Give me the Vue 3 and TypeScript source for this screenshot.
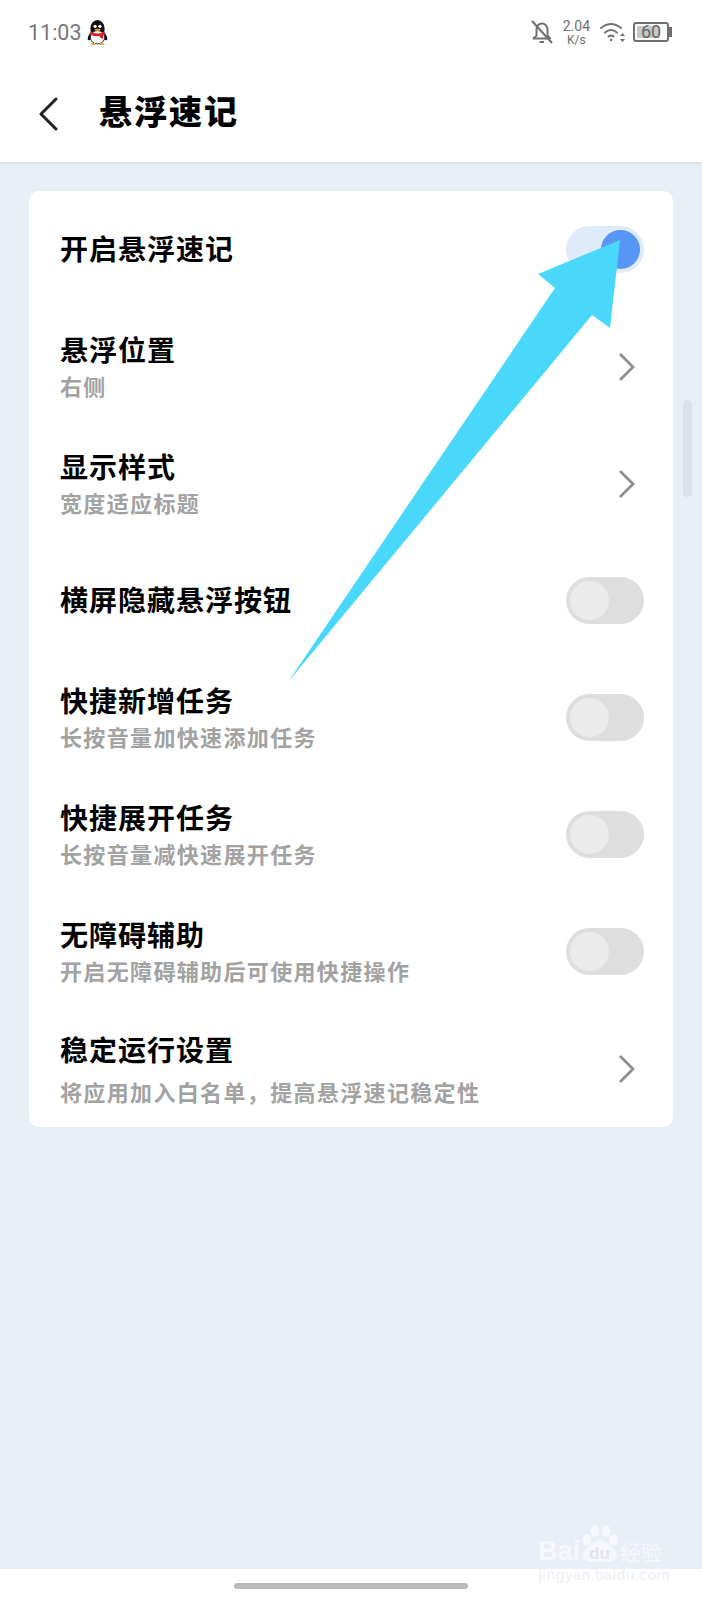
<template>
  <div class="page">
    <div class="topBar">
      <div class="statusBar">
        <div class="statusLeft">
          <span class="time">11:03</span>
          <svg class="penguin" width="21" height="25" viewBox="0 0 22 26">
            <ellipse cx="11" cy="9" rx="7.5" ry="9" fill="#111" />
            <ellipse cx="3.5" cy="17" rx="2" ry="4.5" fill="#111" transform="rotate(25 3.5 17)" />
            <ellipse cx="18.5" cy="17" rx="2" ry="4.5" fill="#111" transform="rotate(-25 18.5 17)" />
            <ellipse cx="11" cy="18" rx="7.5" ry="7" fill="#fff" stroke="#222" stroke-width="1" />
            <path d="M3.5 12 Q11 16 18.500 12 L18.800 15 Q11 19 3.200 15 Z" fill="#d8232a" />
            <path d="M13 15 L17 15 L16.500 20 L13.500 18 Z" fill="#d8232a" />
            <circle cx="8.500" cy="6.500" r="1.700" fill="#fff" />
            <circle cx="13.500" cy="6.500" r="1.700" fill="#fff" />
            <path d="M7.500 10 Q11 8 14.500 10 Q11 12.500 7.500 10 Z" fill="#f0a81e" />
            <ellipse cx="6.500" cy="25" rx="3" ry="1" fill="#e8a63a" />
            <ellipse cx="15.500" cy="25" rx="3" ry="1" fill="#e8a63a" />
          </svg>
        </div>
        <div class="statusRight">
          <svg width="22" height="24" viewBox="0 0 22 24" fill="none" stroke="#707070" stroke-width="2">
            <path d="M2.500 18.500 H19 L16.500 15.500 V9.500 A5.500 6 0 0 0 5.500 9.500 V15.500 Z" stroke-linejoin="round" />
            <path d="M8.500 22 H13" />
            <path d="M1 1 L21 23" />
          </svg>
          <div class="speed">
            <span>2.04</span>
            <span class="speedUnit">K/s</span>
          </div>
          <svg width="26" height="22" viewBox="0 0 26 22" fill="none" stroke="#707070" stroke-width="2" stroke-linecap="round">
            <path d="M1 7 Q11 -1 21 7" />
            <path d="M5 11.500 Q11 6.500 17 11.500" />
            <path d="M8.500 15.500 Q11 13.500 13.500 15.500" />
            <circle cx="11" cy="19" r="1.300" fill="#707070" stroke="none" />
            <path d="M22.500 12 L25 15 H20 Z M22.500 21 L25 18 H20 Z" fill="#707070" stroke="none" />
          </svg>
          <div class="battery">
            <div class="batteryBody">
              <div class="batteryFill"></div>
              <span class="batteryText">60</span>
            </div>
            <div class="batteryCap"></div>
          </div>
        </div>
      </div>
      <div class="header">
        <svg class="back" width="22" height="34" viewBox="0 0 22 34" fill="none" stroke="#222" stroke-width="3" stroke-linecap="round" stroke-linejoin="round">
          <path d="M18 2 L3 17 L18 32" />
        </svg>
        <span class="pageTitle">悬浮速记</span>
      </div>
    </div>

    <div class="content">
      <div class="card">
        <div v-for="item in rows" :key="item.title" class="row">
          <div class="rowText">
            <div class="rowTitle">{{ item.title }}</div>
            <div v-if="item.sub" class="rowSub">{{ item.sub }}</div>
          </div>
          <div v-if="item.kind === 'on'" class="switch on"><span class="knob"></span></div>
          <div v-else-if="item.kind === 'off'" class="switch"><span class="knob"></span></div>
          <svg v-else class="chevron" width="17" height="30" viewBox="0 0 17 30" fill="none" stroke="#8e8e8e" stroke-width="2.800" stroke-linejoin="miter">
            <path d="M2 2 L15 15 L2 28" />
          </svg>
        </div>
      </div>
      <div class="scrollThumb"></div>

      <div class="watermark">
        <div class="wmTop">
          <span class="wmBai">Bai</span>
          <div class="wmPawBox">
            <svg width="36" height="38" viewBox="0 0 36 38">
              <ellipse cx="5" cy="15" rx="4.500" ry="5.500" fill="#f6f8fb" />
              <ellipse cx="13" cy="6" rx="4.500" ry="6" fill="#f6f8fb" />
              <ellipse cx="24" cy="6" rx="4.500" ry="6" fill="#f6f8fb" />
              <ellipse cx="31.500" cy="15" rx="4.500" ry="5.500" fill="#f6f8fb" />
              <path d="M18 15 C24 15 35 25 35 31 C35 38 25 37 18 36 C11 37 1 38 1 31 C1 25 12 15 18 15 Z" fill="#f6f8fb" />
            </svg>
            <span class="wmDu">du</span>
          </div>
          <span class="wmCn">经验</span>
        </div>
        <div class="wmUrl">jingyan.baidu.com</div>
      </div>
    </div>

    <div class="navBar"><div class="homeBar"></div></div>

    <svg class="arrow" width="702" height="1600" viewBox="0 0 702 1600">
      <polygon points="620,240 610,328 592,315 288,682 555,288 538,274" fill="#49d8fc" />
    </svg>
  </div>
</template>

<script setup lang="ts">
type RowKind = 'on' | 'off' | 'link'

interface SettingRow {
  title: string
  sub?: string
  kind: RowKind
}

const rows: SettingRow[] = [
  { title: '开启悬浮速记', kind: 'on' },
  { title: '悬浮位置', sub: '右侧', kind: 'link' },
  { title: '显示样式', sub: '宽度适应标题', kind: 'link' },
  { title: '横屏隐藏悬浮按钮', kind: 'off' },
  { title: '快捷新增任务', sub: '长按音量加快速添加任务', kind: 'off' },
  { title: '快捷展开任务', sub: '长按音量减快速展开任务', kind: 'off' },
  { title: '无障碍辅助', sub: '开启无障碍辅助后可使用快捷操作', kind: 'off' },
  { title: '稳定运行设置', sub: '将应用加入白名单，提高悬浮速记稳定性', kind: 'link' }
]
</script>

<style>
body {
  background: #fff;
}
</style>

<style scoped>
.page {
  position: relative;
  width: 702px;
  height: 1600px;
  display: flex;
  flex-direction: column;
  overflow: hidden;
  background: #e9eff6;
  font-family: "Noto Sans CJK SC", "Liberation Sans", sans-serif;
}

.topBar {
  height: 162px;
  display: flex;
  flex-direction: column;
  background: #fff;
  box-shadow: 0 1px 3px rgba(120, 130, 150, 0.25);
}

.statusBar {
  height: 64px;
  padding: 0 28px;
  display: flex;
  align-items: center;
  justify-content: space-between;
}

.statusLeft {
  display: flex;
  align-items: center;
  gap: 5px;
}

.time {
  font-family: Roboto, "Liberation Sans", sans-serif;
  font-size: 21.500px;
  color: #777;
}

.statusRight {
  display: flex;
  align-items: center;
  margin-right: 2px;
  gap: 7px;
}

.speed {
  display: flex;
  flex-direction: column;
  align-items: center;
  margin: 2px 3px 0;
  font-family: Roboto, "Liberation Sans", sans-serif;
  font-size: 14px;
  line-height: 14px;
  color: #707070;
}

.speedUnit {
  font-size: 12px;
}

.battery {
  display: flex;
  align-items: center;
}

.batteryBody {
  position: relative;
  box-sizing: border-box;
  width: 36px;
  height: 20px;
  border: 2px solid #707070;
  border-radius: 3px;
}

.batteryFill {
  width: 22px;
  height: 12px;
  margin: 2px;
  background: #c8c8c8;
}

.batteryText {
  position: absolute;
  left: 0;
  right: 0;
  top: -2px;
  text-align: center;
  font-family: Roboto, "Liberation Sans", sans-serif;
  font-size: 18px;
  line-height: 20px;
  color: #666;
}

.batteryCap {
  width: 3px;
  height: 10px;
  background: #707070;
}

.header {
  flex: 1;
  display: flex;
  align-items: center;
  padding-left: 38px;
  padding-bottom: 6px;
  gap: 39px;
}

.back {
  margin-top: 8px;
}

.pageTitle {
  font-size: 33px;
  font-weight: 900;
  letter-spacing: 2px;
  color: #000;
}

.content {
  flex: 1;
  position: relative;
  padding: 29px 29px 0;
}

.card {
  background: #fff;
  border-radius: 10px;
  display: flex;
  flex-direction: column;
}

.row {
  height: 117px;
  display: flex;
  align-items: center;
  justify-content: space-between;
  padding: 0 29px 0 31px;
}

.rowText {
  margin-bottom: 4px;
}

.rowTitle {
  font-size: 28px;
  font-weight: 700;
  line-height: 38px;
  letter-spacing: 1px;
  color: #000;
}

.rowSub {
  margin-top: 1px;
  margin-bottom: -2px;
  font-size: 22px;
  font-weight: 700;
  line-height: 32px;
  letter-spacing: 1.350px;
  color: #a2a2a2;
}

.row:last-child .rowSub {
  margin-top: 7px;
  margin-bottom: -4px;
}

.switch {
  width: 78px;
  height: 47px;
  padding: 4px;
  box-sizing: border-box;
  border-radius: 24px;
  background: #dedede;
  display: flex;
}

.switch.on {
  justify-content: flex-end;
  background: #dfeafa;
}

.knob {
  width: 39px;
  height: 39px;
  border-radius: 50%;
  background: #ebebeb;
}

.switch.on .knob {
  background: #5796f5;
}

.chevron {
  margin-right: 9px;
}

.scrollThumb {
  position: absolute;
  right: 10px;
  top: 238px;
  width: 9px;
  height: 97px;
  border-radius: 5px;
  background: #dce0e7;
}

.watermark {
  position: absolute;
  right: 38px;
  bottom: -17px;
  width: 126px;
  display: flex;
  flex-direction: column;
  color: #f6f8fb;
}

.wmTop {
  height: 38px;
  display: flex;
  align-items: flex-end;
  white-space: nowrap;
  font-family: "Liberation Sans", sans-serif;
}

.wmBai {
  width: 44px;
  font-size: 27px;
  font-weight: 700;
  line-height: 24px;
}

.wmPawBox {
  position: relative;
  width: 36px;
  height: 38px;
}

.wmDu {
  position: absolute;
  left: 7px;
  bottom: -1px;
  font-size: 17px;
  font-weight: 700;
  color: #dfe6f0;
}

.wmCn {
  margin-left: 2px;
  font-family: "Noto Sans CJK SC", sans-serif;
  font-size: 21px;
  line-height: 24px;
}

.wmUrl {
  font-family: "Liberation Sans", sans-serif;
  font-size: 15px;
  font-weight: 700;
  line-height: 23px;
  white-space: nowrap;
  color: #f1f2f4;
}

.navBar {
  height: 31px;
  display: flex;
  align-items: center;
  justify-content: center;
  background: #fff;
}

.homeBar {
  width: 234px;
  height: 6px;
  margin-top: 2px;
  border-radius: 3px;
  background: #b9b9b9;
}

.arrow {
  position: absolute;
  left: 0;
  top: 0;
  pointer-events: none;
}
</style>
